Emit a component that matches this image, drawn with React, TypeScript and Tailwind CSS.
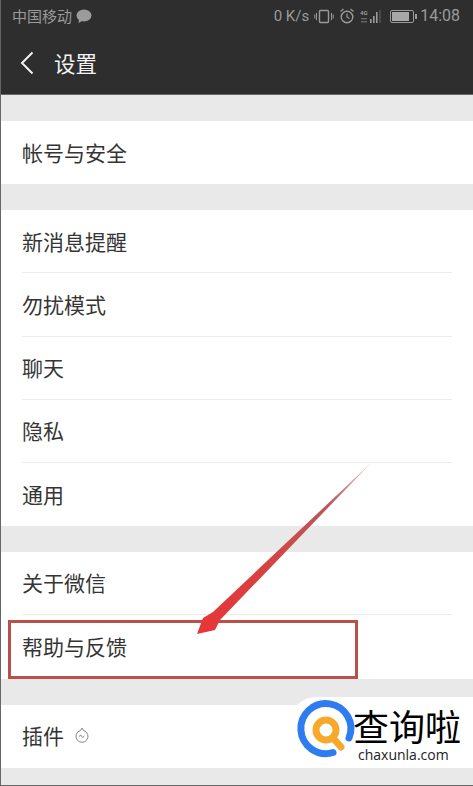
import React from 'react';

const CJK = "font-['Noto_Sans_CJK_SC','Noto_Sans',sans-serif]";

const Row = ({ label, last, children }: { label: string; last?: boolean; children?: React.ReactNode }) => (
    <div className="pl-[21px] pr-[21px]">
        <div className={`h-[63.2px] flex items-center gap-[10px] text-[21px] text-[#353535] ${last ? '' : 'border-b border-[#ececec]'}`}>
            <span>{label}</span>
            {children}
        </div>
    </div>
);

const Group = ({ children }: { children: React.ReactNode }) => (
    <div className="bg-white mt-[26px]">{children}</div>
);

export default function App() {
    return (
        <div className={`relative w-[473px] h-[786px] overflow-hidden bg-[#e9e9e9] border-l border-b border-[#666] ${CJK}`}>
            {/* Status bar + title */}
            <div className="h-[95px] bg-[#2e2e2e] border-b border-[#6a6a6a]">
                <div className="h-[32px] pl-[11px] pr-[13px] flex items-center justify-between text-[#9b9b9b]">
                    <div className="flex items-center gap-[4px] text-[15px]">
                        <span>中国移动</span>
                        <svg width="16" height="14" viewBox="0 0 16 14">
                            <ellipse cx="8" cy="6.5" rx="7.5" ry="6" fill="#9b9b9b" />
                            <path d="M3 10 L2.5 14 L7 11.5 Z" fill="#9b9b9b" />
                        </svg>
                    </div>
                    <div className="flex items-center gap-[5px] text-[15px] font-['Roboto',sans-serif]">
                        <span>0 K/s</span>
                        <svg width="20" height="15" viewBox="0 0 20 15" fill="none" stroke="#9b9b9b">
                            <rect x="5.5" y="1.5" width="9" height="12" rx="1" strokeWidth="1.4" />
                            <path d="M2.5 4v7M0.8 5.5v4M17.5 4v7M19.2 5.5v4" strokeWidth="1" />
                        </svg>
                        <svg width="16" height="16" viewBox="0 0 16 16" fill="none" stroke="#9b9b9b">
                            <circle cx="8" cy="9" r="5.8" strokeWidth="1.4" />
                            <path d="M8 5.5V9l2.5 1.5M1.5 3.5l3-2.5M14.5 3.5l-3-2.5" strokeWidth="1.2" />
                        </svg>
                        <svg width="22" height="15" viewBox="0 0 22 15" fill="#9b9b9b">
                            <text x="0" y="6" fontSize="6" fontWeight="700" fontFamily="Roboto, sans-serif">4G</text>
                            <rect x="1" y="9" width="6" height="1.4" opacity="0.5" />
                            <rect x="1" y="12" width="6" height="1.4" opacity="0.5" />
                            <rect x="10" y="10" width="1.6" height="4" />
                            <rect x="13" y="7" width="1.6" height="7" />
                            <rect x="16" y="3" width="1.6" height="11" />
                            <rect x="19.5" y="1" width="1" height="13" opacity="0.5" />
                        </svg>
                        <svg width="28" height="13" viewBox="0 0 28 13" className="ml-[3px]">
                            <rect x="0.5" y="0.5" width="23" height="12" rx="1.5" fill="none" stroke="#9b9b9b" />
                            <rect x="2" y="2" width="17" height="9" fill="#a8a8a8" />
                            <rect x="25" y="4" width="2" height="5" fill="#9b9b9b" />
                        </svg>
                        <span className="text-[16px] -ml-[3px]">14:08</span>
                    </div>
                </div>
                <div className="h-[62px] pl-[19px] flex items-center text-white">
                    <svg width="14" height="24" viewBox="0 0 14 24" fill="none" stroke="#f0f0f0" strokeWidth="2">
                        <path d="M12.5 1.5 L2 12 L12.5 22.5" />
                    </svg>
                    <span className="ml-[20px] text-[21.5px] text-[#f2f2f2]">设置</span>
                </div>
            </div>

            <Group>
                <Row label="帐号与安全" last />
            </Group>
            <Group>
                <Row label="新消息提醒" />
                <Row label="勿扰模式" />
                <Row label="聊天" />
                <Row label="隐私" />
                <Row label="通用" last />
            </Group>
            <Group>
                <Row label="关于微信" />
                <Row label="帮助与反馈" last />
            </Group>
            <Group>
                <Row label="插件" last>
                    <svg width="16" height="20" viewBox="0 0 16 20" fill="none" stroke="#8a8a8a" strokeWidth="1">
                        <path d="M8 2 L9.5 4.5 A6 6 0 1 1 6.5 4.5 Z" />
                        <path d="M5 10.5l1.8-1.5 1.8 2.5 1.8-1.5" />
                    </svg>
                </Row>
            </Group>

            {/* Annotation: red box around the item */}
            <div className="absolute left-[7px] top-[620px] w-[350px] h-[59px] border-[3px] border-[#b9504a]" />

            {/* Annotation: arrow */}
            <svg className="absolute -left-px top-0" width="473" height="786" viewBox="0 0 473 786">
                <defs>
                    <linearGradient id="arrowFade" x1="372" y1="462" x2="197" y2="634" gradientUnits="userSpaceOnUse">
                        <stop offset="0" stopColor="#e0c8c8" />
                        <stop offset="0.25" stopColor="#b8585c" />
                        <stop offset="0.65" stopColor="#d9403f" />
                        <stop offset="1" stopColor="#e83538" />
                    </linearGradient>
                </defs>
                <path d="M372 462 L213 612 L203 618 L197 634 L215 630 L220 620 Z" fill="url(#arrowFade)" />
            </svg>

            {/* Watermark */}
            <div className="absolute left-[289px] top-[697px] w-[184px] h-[71px] bg-white rounded-tl-[26px] flex">
                <svg className="ml-[9px] mt-[4px] shrink-0 overflow-visible" width="56" height="56" viewBox="0 0 56 56" fill="none">
                    <path d="M50 37 A25 25 0 1 0 34 51.5" stroke="#2f7bf0" strokeWidth="7" strokeLinecap="round" />
                    <circle cx="27" cy="29" r="10" stroke="#f8a92c" strokeWidth="7" />
                    <path d="M34 37 L42 46" stroke="#f8a92c" strokeWidth="7" strokeLinecap="round" />
                </svg>
                <div className="-ml-[2px] mt-[7px] flex flex-col items-start">
                    <span className="text-[36px] leading-[43px] text-black font-['Noto_Sans_CJK_SC',serif]">查询啦</span>
                    <span className="ml-[5px] text-[14px] leading-[16px] text-[#222] font-['Open_Sans',sans-serif]">chaxunla.com</span>
                </div>
            </div>
        </div>
    );
}
